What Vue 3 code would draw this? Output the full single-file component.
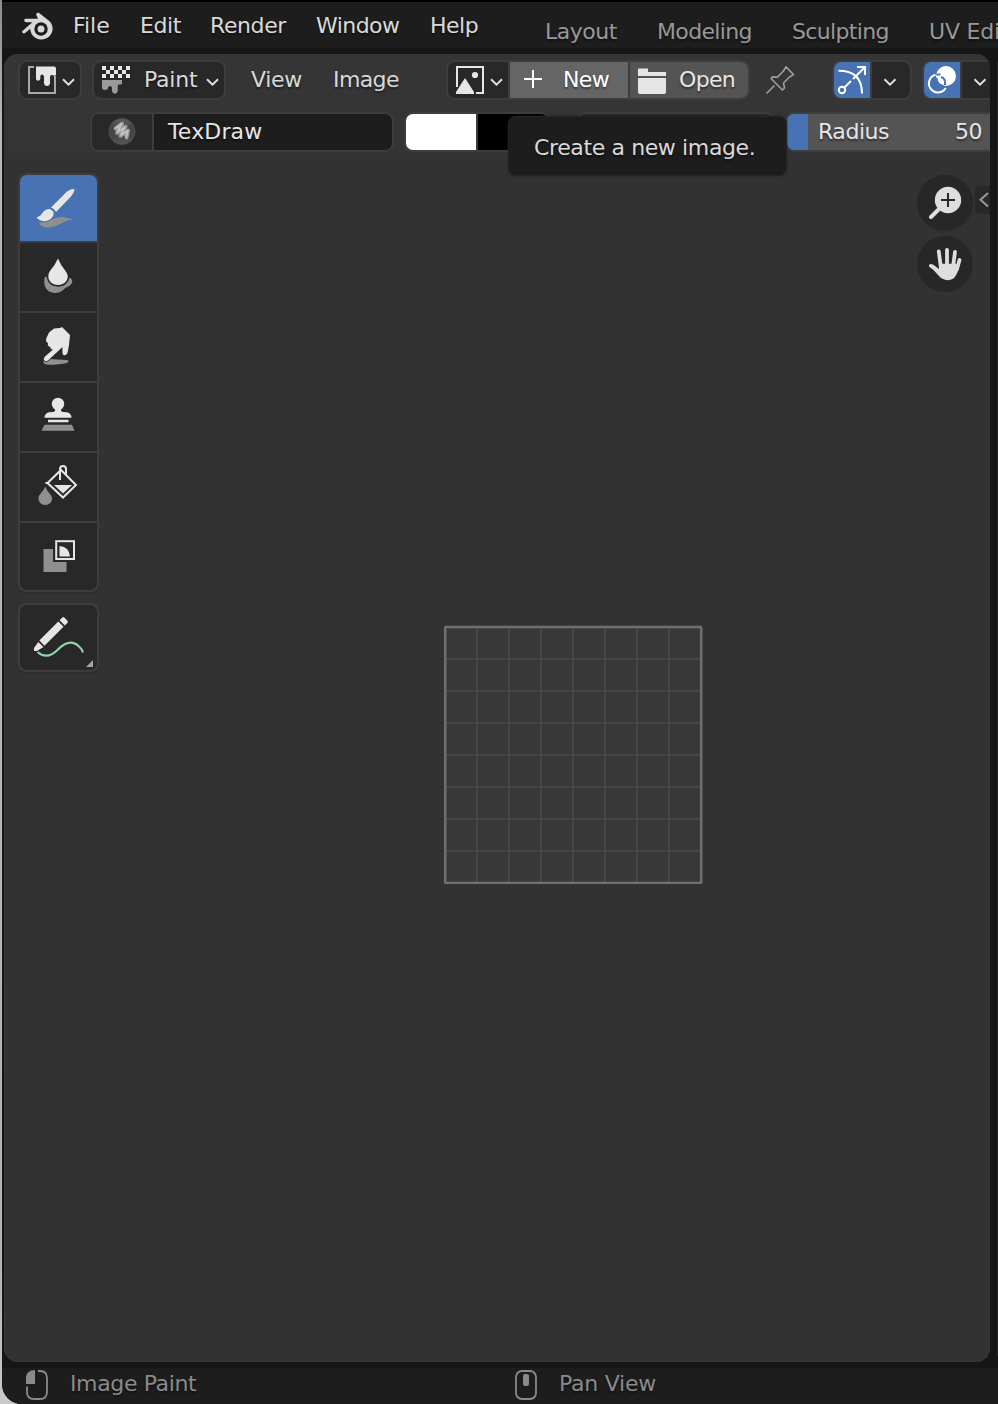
<script setup>
const menus = [
  { label: 'File', w: 67, ls: -0.05 },
  { label: 'Edit', w: 70, ls: -0.45 },
  { label: 'Render', w: 106, ls: -0.4 },
  { label: 'Window', w: 114, ls: -0.55 },
  { label: 'Help', w: 115, ls: -0.5 },
]
const workspaces = [
  { label: 'Layout', w: 112, ls: -0.5 },
  { label: 'Modeling', w: 135, ls: -0.65 },
  { label: 'Sculpting', w: 137, ls: -0.65 },
  { label: 'UV Editing', w: 140, ls: -0.2 },
]
const lines = [1, 2, 3, 4, 5, 6, 7]
</script>

<template>
  <div class="desktop">
    <div class="window">
      <header class="menubar">
        <svg class="logo" viewBox="20 10 34 32" width="34" height="32">
          <path d="M25 18.8H38L36.2 14.8Q36.1 12.2 38.8 12.8L49 20.8A11.2 10.8 0 1 1 30.2 28.8L24.8 33.3Q22 34 22.2 31.2L32.4 22.3H26Q23 21 25 18.8Z" fill="#d9d9d9" />
          <circle cx="41" cy="29" r="6.7" fill="#1d1d1d" />
          <circle cx="41" cy="29" r="3.5" fill="#d9d9d9" />
        </svg>
        <nav class="menus">
          <span v-for="m in menus" :key="m.label" :style="{ width: m.w + 'px', letterSpacing: m.ls + 'px' }">{{ m.label }}</span>
        </nav>
        <nav class="tabs">
          <span v-for="t in workspaces" :key="t.label" :style="{ width: t.w + 'px', letterSpacing: t.ls + 'px' }">{{ t.label }}</span>
        </nav>
      </header>

      <main class="editor">
        <div class="row header">
          <div class="box kind">
            <svg viewBox="20 62 60 36" width="60" height="36">
              <path d="M34 67H29V93H55V76" fill="none" stroke="#a9a9a9" stroke-width="2" />
              <path d="M36 66.5H54Q56 66.5 56 68.5V75Q54 76.5 52 74.7Q50 75 50 77V83.5Q49.5 86 47 86T44 83.5V76.5Q43.5 74.5 42 74.5T40.3 76.5V79Q39.8 80.7 38 80.7T36 79Z" fill="#e6e6e6" />
              <path d="M63 79.3L68.5 84.6L74 79.3" class="chev" />
            </svg>
          </div>
          <div class="box mode">
            <svg viewBox="94 62 46 36" width="46" height="36">
              <path d="M102 68H130M106 72H130M102 76H130" stroke="#e6e6e6" stroke-width="4" stroke-dasharray="4 4" />
              <path d="M102 80H122V84Q120 85 118.3 84.6Q117.700 85.2 117.700 87V91Q117.200 93.700 114.800 93.700T112 91V87.500Q111.300 86 110 86T108 87.500V88.600Q107.500 90 105 90T102 88.300Z" fill="#9a9a9a" />
            </svg>
            <span>Paint</span>
            <svg class="end" viewBox="204 62 18 36" width="18" height="36"><path d="M207 79.3L212.500 84.600L218 79.3" class="chev" /></svg>
          </div>
          <span class="plain view">View</span>
          <span class="plain image">Image</span>
          <div class="box imagebox">
            <svg class="pick" viewBox="448 62 60 36" width="60" height="36">
              <path d="M457 87V67H483V93H476" fill="none" stroke="#e6e6e6" stroke-width="2" />
              <path d="M465 78L474 92V94H456V92Z" fill="#e6e6e6" />
              <circle cx="475" cy="75" r="3.1" fill="#e6e6e6" />
              <path d="M491 79.3L496.500 84.600L502 79.3" class="chev" />
            </svg>
            <div class="new">
              <svg viewBox="510 62 40 36" width="40" height="36"><path d="M524 79H542M533 70V88" stroke="#fff" stroke-width="2" /></svg>
              <span>New</span>
            </div>
            <div class="open">
              <svg viewBox="630 62 40 36" width="40" height="36">
                <path d="M638 68.500H648V72H666V76H638ZM638 78H666V92Q666 94 664 94H640Q638 94 638 92Z" fill="#e6e6e6" />
              </svg>
              <span>Open</span>
            </div>
          </div>
          <svg class="pin" viewBox="762 62 36 36" width="36" height="36">
            <path d="M766.500 93.500L774.500 85.500M771 78.500L782.500 90L784.500 88L783.500 83L789.500 77L793.500 74.500L786 66.800L783.500 71L777.500 77.200L772.500 76.800Z" fill="none" stroke="#9b9b9b" stroke-width="1.700" stroke-linejoin="round" />
          </svg>
          <div class="box pair gizmo">
            <svg class="on" viewBox="834 62 36 36" width="36" height="36">
              <g fill="none" stroke="#fff" stroke-width="2">
                <path d="M838.500 70.800Q862 70.800 862 93.500M844.700 87.300L851 81M853 79L864 68M857 67H865V75" />
                <circle cx="842" cy="90" r="3.200" />
              </g>
            </svg>
            <svg class="drop" viewBox="872 62 38 36" width="38" height="36"><path d="M884.500 79.300L890 84.600L895.500 79.300" class="chev" /></svg>
          </div>
          <div class="box pair overlay">
            <svg class="on" viewBox="924 62 36 36" width="36" height="36">
              <circle cx="946" cy="76" r="10" fill="#fff" />
              <path d="M935.500 74.800A9 9 0 1 0 945.700 88" fill="none" stroke="#fff" stroke-width="2" />
              <path d="M936.500 78Q937 85 943.500 86" fill="none" stroke="#4772b3" stroke-width="2" />
              <path d="M936.500 74.500L940.500 74.500M945 85V81.500" fill="none" stroke="#4772b3" stroke-width="2" />
              <path d="M941 77Q944.500 78 945.200 81.500" fill="none" stroke="#4772b3" stroke-width="2" />
            </svg>
            <svg class="drop" viewBox="962 62 38 36" width="38" height="36"><path d="M974.500 79.300L980 84.600L985.500 79.300" class="chev" /></svg>
          </div>
        </div>

        <div class="row settings">
          <div class="box brush">
            <svg viewBox="92 114 60 36" width="60" height="36">
              <defs>
                <linearGradient id="ball" x1="0" y1="0" x2="0" y2="1">
                  <stop offset="0" stop-color="#5c6165" /><stop offset=".35" stop-color="#434446" /><stop offset=".75" stop-color="#484848" /><stop offset="1" stop-color="#5a5a5a" />
                </linearGradient>
              </defs>
              <circle cx="122" cy="131.500" r="13" fill="url(#ball)" stroke="#494f54" stroke-width="1" />
              <path d="M115.500 128.500L122 123.500L117 133L125.500 126.500L120.500 136L128 130.500L126.500 137.500" fill="none" stroke="#989898" stroke-width="4" stroke-linecap="round" stroke-linejoin="round" />
              <path d="M116 128L121.500 124L117.500 132L124.500 127.500L121 135L127.500 131L126.500 136.500" fill="none" stroke="#c2c2c2" stroke-width="1.800" stroke-linecap="round" stroke-linejoin="round" />
            </svg>
            <span>TexDraw</span>
          </div>
          <div class="box swatches"><i class="white"></i><i class="black"></i></div>
          <div class="box hidden-field"></div>
          <div class="box radius"><span>Radius</span><span>50</span></div>
        </div>

        <div class="tooltip">Create a new image.</div>

        <aside class="toolbar">
          <div class="tools">
            <svg class="active" viewBox="20 175 77 66" width="77" height="66">
              <path d="M39 222.500Q46 223 53 219Q60 216 65 217.300Q69 218.800 73.500 219.500Q66 220 61 223.500Q53 228 46 227.500Q41 227 39 222.500Z" fill="#8f8f8f" />
              <path d="M51 207.500L67 191.500Q72 188.500 74.500 189.200Q74.500 192 70.500 197L56 212Q54.500 208.800 51 207.500Z" fill="#e6e6e6" />
              <path d="M36.500 217.500Q41 216 43 212Q46 208.500 50 209Q54.500 211 53.500 215Q51.500 220.500 45 221.200Q39.500 221 36.500 217.500Z" fill="#e6e6e6" stroke="#4772b3" stroke-width="1.800" paint-order="stroke" />
            </svg>
            <svg viewBox="20 243 77 68" width="77" height="68">
              <path d="M44.500 277.500Q46.500 276 47.500 278Q49 286 58 286.500Q64 286.500 68.500 280.500Q67.500 277.500 71 278.200Q74 282 70 285.500Q65 287.500 62 291Q56 294.500 49 291.500Q43 287.500 44.500 277.500Z" fill="#8f8f8f" />
              <path d="M58 258.500Q61 266 65.500 271Q68.500 275 67.500 278.500Q65.500 285 58 285T48.500 278.500Q47.500 274 51 269.500Q55 265 58 258.500Z" fill="#e6e6e6" stroke="#282828" stroke-width="3" paint-order="stroke" />
            </svg>
            <svg viewBox="20 313 77 68" width="77" height="68">
              <path d="M43.500 361Q45 358.500 53 359.200L67 360Q70 361 67 363Q60 364.800 48 364.800Q42.500 364 43.500 361Z" fill="#8f8f8f" />
              <path d="M62 327L70 335L69 345L67.500 353Q66 356 63.500 355.200Q62 354 62.500 347L48.500 360Q46.500 362 44.500 360.500Q43 358.500 45 356.500L53 349.500Q50 349.500 50.500 347Q47 346.500 48 343Q45 341.500 46.500 338L49 332.500L54 328.500L60 328Z" fill="#e6e6e6" stroke="#282828" stroke-width="1.500" paint-order="stroke" />
            </svg>
            <svg viewBox="20 383 77 68" width="77" height="68">
              <circle cx="58" cy="404" r="6.200" fill="#e6e6e6" />
              <path d="M55 408H61V411Q62 412.200 67 412.200Q71.500 413.500 71.500 417.700H44.500Q44.500 413.500 49 412.200Q54 412.200 55 411ZM48 419.700H68.500V422.300H48Z" fill="#e6e6e6" />
              <path d="M44.500 424.700H72L74.500 430.700H41.500Z" fill="#8f8f8f" />
            </svg>
            <svg viewBox="20 453 77 68" width="77" height="68">
              <path d="M45.300 486.500Q47 491 50 494Q52.200 496.500 52.200 498.500Q51.500 505 45.300 505T38.300 498.500Q38.300 496 41 493Q44 490 45.300 486.500Z" fill="#8f8f8f" />
              <g fill="none" stroke="#e6e6e6" stroke-width="2"><path d="M61 470L76 485L63 497.500L47.500 483ZM45.500 483H49" /><path d="M60 480V468.500Q60.500 466 63 466Q66 466 66 469V474" /></g>
              <path d="M54 485H72L63 493.500Z" fill="#e6e6e6" />
            </svg>
            <svg viewBox="20 523 77 67" width="77" height="67">
              <path d="M43.500 549H53V562H66.500V572H43.500Z" fill="#8f8f8f" />
              <rect x="56.200" y="541.200" width="17.800" height="17.800" fill="none" stroke="#e6e6e6" stroke-width="2" />
              <path d="M59.500 546Q69.500 547 70 556.500H59.500Z" fill="#e6e6e6" />
            </svg>
          </div>
          <div class="tools annotate">
            <svg viewBox="20 605 77 65" width="77" height="65">
              <path d="M37.500 652Q47 660.500 58 649.500Q70 637.500 79 646.500Q82 649 83 652.500" fill="none" stroke="#8fd6ab" stroke-width="2.100" />
              <path d="M39.300 640.500L58.300 621.500L63.500 626.700L44.500 645.700ZM59.600 620.200L62 617.700Q63.200 616.500 64.500 617.700L67.500 620.700Q68.500 622 67.300 623L64.800 625.400ZM38.300 642L43.500 647L37 651H34V648Z" fill="#e6e6e6" />
              <path d="M93 660V667H86Z" fill="#a4a4a4" />
            </svg>
          </div>
        </aside>

        <div class="navigate">
          <svg viewBox="917 175 56 56" width="56" height="56">
            <circle cx="945" cy="203" r="28" fill="#272727" />
            <circle cx="948" cy="200" r="13.200" fill="#dedede" />
            <path d="M940.500 207.500L931 217" stroke="#dedede" stroke-width="4" stroke-linecap="round" />
            <path d="M941 200H955M948 193V207" stroke="#272727" stroke-width="2" />
          </svg>
          <svg viewBox="917 236 56 56" width="56" height="56">
            <circle cx="945" cy="264" r="28" fill="#272727" />
            <path d="M940.800 267L938.800 251.500M947 266V250M953 267L955 252M957 269L959.500 260" stroke="#dedede" stroke-width="3.800" stroke-linecap="round" />
            <path d="M939 263.700H956L959 268Q957 275 953.500 278.500Q947 282 941 278Q937 274 933.500 270L929.500 267Q928 264.500 930.500 264L933 264.500L939 269Z" fill="#dedede" />
          </svg>
        </div>
        <div class="sidetab"><svg viewBox="975 186 15 28" width="15" height="28"><path d="M988 193L980.500 199.800L988 206.500" fill="none" stroke="#989898" stroke-width="2" /></svg></div>

        <svg class="canvas" viewBox="444 625 259 259" width="259" height="259">
          <rect x="445.500" y="627.500" width="256" height="255" fill="#383838" />
          <g stroke="#464646" stroke-width="2">
            <path v-for="n in lines" :key="'v' + n" :d="`M${445 + n * 32} 628V882`" />
            <path v-for="n in lines" :key="'h' + n" :d="`M446 ${627 + n * 32}H701`" />
          </g>
          <rect x="445.200" y="627" width="256" height="256" rx="1" fill="none" stroke="#707070" stroke-width="2.500" />
        </svg>
      </main>

      <footer class="status">
        <svg viewBox="24 1368 26 36" width="26" height="36">
          <path d="M35 1370V1384H26V1377Q27 1370 35 1370Z" fill="#8a8a8a" />
          <path d="M38 1371H40Q47 1371 47 1378V1392Q47 1399 40 1399H34Q27 1399 27 1392V1386.500" fill="none" stroke="#8a8a8a" stroke-width="1.800" />
        </svg>
        <span class="first">Image Paint</span>
        <svg viewBox="513 1368 26 36" width="26" height="36">
          <rect x="516" y="1371" width="20" height="28" rx="6" fill="none" stroke="#8a8a8a" stroke-width="1.800" />
          <rect x="523" y="1374" width="6" height="12" rx="2" fill="#8a8a8a" />
        </svg>
        <span class="second">Pan View</span>
      </footer>
      <div class="neighbour"></div>
    </div>
  </div>
</template>

<style>
body { margin: 0; overflow: hidden; }
</style>

<style scoped>
.desktop {
  width: 998px;
  height: 1404px;
  overflow: hidden;
  background: linear-gradient(#8c8c8c, #b9b9b9 9%, #b4b4b4 90%, #c9c9c9);
  font-family: "DejaVu Sans", sans-serif;
  font-size: 22px;
  line-height: 26px;
  color: #d9d9d9;
  white-space: nowrap;
  text-shadow: 0 2px 2px rgba(0, 0, 0, 0.45);
}
.window {
  position: relative;
  box-sizing: border-box;
  margin-left: 2px;
  width: 996px;
  height: 1404px;
  padding-left: 2px;
  border-top: 2px solid #000;
  border-bottom-left-radius: 20px;
  background: #161616;
  overflow: hidden;
}
svg { display: block; flex: none; }
span { flex: none; box-sizing: border-box; }
.chev { fill: none; stroke: #e0e0e0; stroke-width: 2; }

.menubar { display: flex; height: 46px; margin-left: -2px; background: #1d1d1d; overflow: hidden; }
.logo { margin: 8px 0 0 18px; }
.menus { display: flex; padding: 11px 0 0 19px; flex: none; }
.menus span, .tabs span { display: block; }
.tabs { display: flex; padding-top: 17px; color: #989898; flex: none; }

.editor {
  position: relative;
  width: 986px;
  height: 1308px;
  margin-top: 6px;
  border-radius: 14px;
  background: #323232;
  box-shadow: inset 0 0 0 1px #383838;
  overflow: hidden;
}
.row { display: flex; align-items: center; overflow: hidden; }
.header { height: 52px; background: #353535; }
.settings { height: 52px; background: #343434; }
.box {
  box-sizing: border-box;
  flex: none;
  display: flex;
  align-items: center;
  height: 40px;
  border: 2px solid #3d3d3d;
  border-radius: 9px;
  background: #282828;
  overflow: hidden;
}
.kind { width: 64px; margin-left: 14px; }
.mode { width: 134px; margin-left: 10px; }
.mode span { width: 64px; padding-left: 4px; letter-spacing: -0.2px; }
.plain { height: 26px; }
.view { width: 82px; margin-left: 25px; letter-spacing: -0.3px; }
.image { width: 113px; letter-spacing: -0.6px; }
.imagebox { width: 304px; }
.new, .open { display: flex; align-items: center; width: 118px; height: 36px; border-left: 2px solid #3d3d3d; background: #545454; color: #e6e6e6; }
.new { background: #656565; color: #fff; }
.new span { padding-left: 13px; letter-spacing: -0.6px; }
.open span { padding-left: 9px; letter-spacing: -0.65px; }
.pin { margin-left: 12px; }
.gizmo { width: 80px; margin-left: 34px; }
.overlay { width: 80px; margin-left: 10px; }
.on { background: #4772b3; }
.drop { border-left: 2px solid #3d3d3d; }

.brush { width: 304px; margin-left: 86px; background: #1d1d1d; color: #e6e6e6; }
.brush svg { background: #282828; border-right: 2px solid #3d3d3d; }
.brush span { padding-left: 14px; letter-spacing: 0.15px; }
.swatches { width: 146px; margin-left: 10px; background: #3d3d3d; gap: 2px; }
.swatches i { width: 70px; height: 36px; flex: none; }
.white { background: #fff; }
.black { background: #000; }
.hidden-field { width: 199px; margin-left: 26px; }
.radius {
  width: 224px;
  margin-left: 10px;
  background: linear-gradient(90deg, #4772b3 21px, #545454 21px);
  color: #e6e6e6;
}
.radius span { letter-spacing: -0.45px; }
.radius span:first-child { width: 168px; padding-left: 31px; }

.tooltip {
  position: absolute;
  left: 504px;
  top: 62px;
  box-sizing: border-box;
  width: 279px;
  height: 60px;
  padding: 18px 0 0 25px;
  border: 1px solid #242424;
  border-radius: 8px;
  background: #1d1d1d;
  box-shadow: 0 0 2px #222;
  letter-spacing: -0.38px;
}
.toolbar { margin: 15px 0 0 14px; width: 81px; }
.tools {
  display: flex;
  flex-direction: column;
  gap: 2px;
  padding: 2px;
  border-radius: 8px;
  background: #3d3d3d;
  box-shadow: 0 2px 1px #2d2d2d;
}
.tools svg { background: #282828; }
.tools svg:first-child { border-radius: 7px 7px 0 0; }
.tools svg:last-child { border-radius: 0 0 7px 7px; }
.tools svg.active { background: #4772b3; }
.annotate { margin-top: 11px; }
.annotate svg:first-child { border-radius: 7px; }
.navigate { position: absolute; left: 913px; top: 121px; display: grid; gap: 5px; }
.sidetab { position: absolute; left: 971px; top: 132px; width: 15px; height: 28px; background: #282828; border-radius: 5px 0 0 5px; }
.canvas { position: absolute; left: 440px; top: 571px; }

.status {
  display: flex;
  height: 36px;
  margin: 6px 0 0 -2px;
  padding-left: 22px;
  background: #1d1d1d;
  color: #8a8a8a;
}
.status span { padding-top: 3px; }
.status .first { width: 463px; padding-left: 20px; letter-spacing: -0.37px; }
.status .second { padding-left: 20px; letter-spacing: -0.25px; }
.neighbour { position: absolute; right: 0; top: 60px; width: 1px; height: 1294px; background: #292929; }
</style>
